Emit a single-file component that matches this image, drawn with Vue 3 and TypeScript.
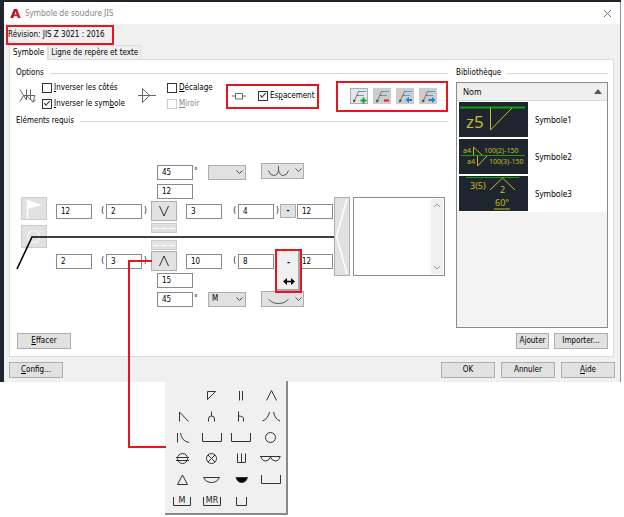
<script setup lang="ts">
import { ref } from 'vue'

const flipSides = ref(false)
const flipSymbol = ref(true)
const stagger = ref(false)
const spacing = ref(true)
const note = ref('')

interface Side {
  size: string
  depth: string
  length: string
  count: string
  pitch: string
  root: string
  angle: string
  method: string
}

const upper = ref<Side>({ size: '12', depth: '2', length: '3', count: '4', pitch: '12', root: '12', angle: '45', method: '' })
const lower = ref<Side>({ size: '2', depth: '3', length: '10', count: '8', pitch: '12', root: '15', angle: '45', method: 'M' })

const leaderTools = [
  { name: 'Ajouter une ligne de repère', kind: 'add' },
  { name: 'Supprimer une ligne de repère', kind: 'remove' },
  { name: 'Repère précédent', kind: 'prev' },
  { name: 'Repère suivant', kind: 'next' },
]

interface Glyph {
  name: string
  d: string
  fill?: boolean
  text?: string
}

/* Each glyph is drawn in a 30 x 21 cell. */
const glyphs: Glyph[] = [
  { name: 'Aucun', d: '' },
  { name: 'Angle', d: 'M11.5 6.5H19.5L11.5 14.5Z' },
  { name: 'Bords droits', d: 'M13.5 6V15.5M16.5 6V15.5' },
  { name: 'V', d: 'M10.5 15.5L15.5 5.5L20.5 15.5' },
  { name: 'Demi-V', d: 'M13.5 15.5V6L22.5 15.5' },
  { name: 'U', d: 'M15.5 5.5V10M12.5 15.5V13Q12.5 10 15.5 10Q18.5 10 18.5 13V15.5' },
  { name: 'J', d: 'M12.5 5.5V15.5M12.5 10Q17.5 10 17.5 13V15.5' },
  { name: 'V évasé', d: 'M6.5 15Q12 13 13.5 6M17.5 6Q19 13 24 15' },
  { name: 'Demi-V évasé', d: 'M11.5 6V15.5M14.5 6Q15.5 14 23 15.5' },
  { name: 'Bouchon', d: 'M6.5 6V14.5H25.5V6' },
  { name: 'Rainure', d: 'M5.5 6V14.5H24.5V6' },
  { name: 'Point', d: 'M9.5 10.5A5 5 0 1 0 19.5 10.5A5 5 0 1 0 9.5 10.5' },
  { name: 'Molette', d: 'M11.5 10.5A5 5 0 1 0 21.5 10.5A5 5 0 1 0 11.5 10.5M10 9.5H23M10 12.5H23' },
  { name: 'Goujon', d: 'M10.5 10.5A5 5 0 1 0 20.5 10.5A5 5 0 1 0 10.5 10.5M12 7L19 14M19 7L12 14' },
  { name: 'Bord', d: 'M11.5 5.5V14.5H19.5V5.5M15.5 5.5V14.5' },
  { name: 'Rechargement', d: 'M4 8.5H24.5M5 8.5Q6 13 9.5 13Q13 13 14.5 9Q16 13 19.5 13Q23 13 24 8.5' },
  { name: 'Triangle', d: 'M11.5 15.5L16.5 6L21.5 15.5Z' },
  { name: 'Envers', d: 'M7.5 8.5H23.5Q21 13.5 15.5 13.5Q10 13.5 7.5 8.5Z' },
  { name: 'Pénétration', d: 'M10 8.5H21.5Q20 13.5 15.7 13.5Q11.5 13.5 10 8.5Z', fill: true },
  { name: 'Support', d: 'M5.5 6V14.5H24.5V6' },
  { name: 'Support M', d: 'M7.5 7V15.5H24.5V7', text: 'M' },
  { name: 'Support MR', d: 'M7.5 7V15.5H24.5V7', text: 'MR' },
  { name: 'Support carré', d: 'M10.5 7V15.5H20.5V7' },
]
</script>

<template>
  <div class="screen">
    <div class="frame">
      <section class="dialog" role="dialog" aria-labelledby="dlg-title">
        <header class="titlebar">
          <svg class="logo" width="11" height="11" viewBox="0 0 11 11" aria-hidden="true">
            <path d="M0.3 10L4 1H7L10.7 10H7.8L7.2 8.2H3.8L3.2 10Z" fill="#c8202c" />
            <path d="M4.5 6.4L5.5 3.4L6.5 6.4Z" fill="#fff" />
            <path d="M4 1H7L7.6 2.5H5.6L3 10H0.3Z" fill="#8e1520" opacity=".55" />
          </svg>
          <h1 id="dlg-title">Symbole de soudure JIS</h1>
          <button class="close" type="button" aria-label="Fermer">
            <svg width="9" height="9" viewBox="0 0 9 9"><path d="M1 1L8 8M8 1L1 8" stroke="#777" fill="none" /></svg>
          </button>
        </header>

        <div class="revision"><span>Révision: JIS Z 3021 : 2016</span></div>

        <nav class="tabs" role="tablist">
          <button type="button" role="tab" aria-selected="true" class="tab active">Symbole</button>
          <button type="button" role="tab" aria-selected="false" class="tab">Ligne de repère et texte</button>
        </nav>

        <div class="panel">
          <div class="left">
            <h2 class="legend">Options</h2>
            <div class="options">
              <svg class="opt-icon" width="18" height="18" viewBox="0 0 18 18" aria-hidden="true">
                <path d="M1 2.5L4.5 8.5L1 14.5M4.5 8.5H16M7.5 2.5V13L4.5 8.5M11.5 2.5V13L7.5 8.5M16 8.5L14 15M11.5 12L13.8 15.2L16.5 13" stroke="#666" fill="none" />
              </svg>
              <div class="checks first">
                <label><input v-model="flipSides" type="checkbox" /><span><u>I</u>nverser les côtés</span></label>
                <label><input v-model="flipSymbol" type="checkbox" /><span><u>I</u>nverser le sym<u>b</u>ole</span></label>
              </div>
              <svg class="opt-icon" width="18" height="18" viewBox="0 0 18 18" aria-hidden="true">
                <path d="M0 8.5H18M4.5 1.5V15.5L11.5 8.5L4.5 1.5" stroke="#666" fill="none" />
              </svg>
              <div class="checks second">
                <label><input v-model="stagger" type="checkbox" /><span><u>D</u>écalage</span></label>
                <label class="off"><input type="checkbox" disabled /><span><u>M</u>iroir</span></label>
              </div>
              <div class="marked spacing">
                <svg width="14" height="8" viewBox="0 0 14 8" aria-hidden="true">
                  <path d="M0 4H3M11 4H14M3.5 1.5H10.5V7H3.5Z" stroke="#666" fill="none" />
                </svg>
                <label><input v-model="spacing" type="checkbox" /><span>Es<u>p</u>acement</span></label>
              </div>
              <div class="marked tools">
                <button v-for="t in leaderTools" :key="t.kind" type="button" class="btn tool" :class="t.kind" :aria-label="t.name">
                  <svg width="17" height="15" viewBox="0 0 17 15">
                    <path d="M3 12.5L7.5 2.5H9M6 6.5H8" stroke="#777" fill="none" />
                    <path d="M2 13.5L2.6 10.5L5 11.8Z" fill="#333" />
                    <path d="M9 2.5H15M8 6.5H13" stroke="#5c9cc9" fill="none" />
                    <path v-if="t.kind === 'add'" d="M9.5 11.5H15.5M12.5 8.5V14.5" stroke="#12a33c" stroke-width="2" />
                    <path v-else-if="t.kind === 'remove'" d="M10 11.5H15" stroke="#ea1c24" stroke-width="2" />
                    <path v-else-if="t.kind === 'prev'" d="M8.5 11L12 8V10H15V12H12V14Z" fill="#1686e0" />
                    <path v-else d="M15.5 11L12 8V10H8.5V12H12V14Z" fill="#1686e0" />
                  </svg>
                </button>
              </div>
            </div>

            <h2 class="legend second-legend">Eléments requis</h2>

            <div class="canvas">
              <div class="flags">
                <button type="button" class="btn" aria-label="Soudure sur chantier">
                  <svg width="24" height="21" viewBox="0 0 24 21"><path d="M5.5 2V20" stroke="#fff" stroke-width="1.5" /><path d="M6 2L20 7L6 11Z" fill="#fff" /></svg>
                </button>
                <button type="button" class="btn" aria-label="Soudure périphérique">
                  <svg width="24" height="21" viewBox="0 0 24 21"><circle cx="11.5" cy="10.5" r="6" stroke="#f4f4f4" stroke-width="1.5" fill="none" /></svg>
                </button>
              </div>

              <div class="fields">
                <div class="row angle top">
                  <input v-model="upper.angle" aria-label="Angle supérieur" /><span class="deg">°</span>
                  <span class="select">
                    <select v-model="upper.method" aria-label="Méthode supérieure"><option></option><option>M</option></select>
                    <svg width="7" height="5" viewBox="0 0 7 5"><path d="M.5 .5L3.5 3.5L6.5 .5" stroke="#444" fill="none" /></svg>
                  </span>
                  <button type="button" class="btn contour" aria-label="Contour supérieur">
                    <svg width="42" height="15" viewBox="0 0 42 15"><path d="M6.5 7.5Q8 12.5 11.5 12.5Q16 12.5 16.5 7V3M16.5 7Q17.5 12.5 21.5 12.5Q25 12.5 26.5 7.5M33.5 5.5L36.5 8.5L39.5 5.5" stroke="#555" fill="none" /></svg>
                  </button>
                </div>
                <div class="row root"><input v-model="upper.root" aria-label="Jeu supérieur" /></div>
                <div class="row main">
                  <input v-model="upper.size" aria-label="Cote supérieure" />
                  <span class="open">(</span><input v-model="upper.depth" aria-label="Profondeur supérieure" /><span class="end">)</span>
                  <button type="button" class="btn symbol" aria-label="Symbole supérieur"><svg width="12" height="12" viewBox="0 0 12 12"><path d="M1.5 1L6 11L10.5 1" stroke="#333" fill="none" /></svg></button>
                  <input v-model="upper.length" class="len" aria-label="Longueur supérieure" />
                  <span class="open">(</span><input v-model="upper.count" aria-label="Nombre supérieur" /><span class="shut">)</span>
                  <button type="button" class="btn dash">-</button>
                  <input v-model="upper.pitch" class="pitch" aria-label="Pas supérieur" />
                </div>
                <button type="button" class="btn ident up" aria-label="Ligne d'identification supérieure"><i></i><i></i><i></i></button>
                <button type="button" class="btn ident down" aria-label="Ligne d'identification inférieure"><i></i><i></i><i></i></button>
                <div class="row main lowmain">
                  <input v-model="lower.size" aria-label="Cote inférieure" />
                  <span class="open">(</span><input v-model="lower.depth" aria-label="Profondeur inférieure" /><span class="end">)</span>
                  <button type="button" class="btn symbol" aria-label="Symbole inférieur"><svg width="12" height="12" viewBox="0 0 12 12"><path d="M1.5 11L6 1L10.5 11" stroke="#333" fill="none" /></svg></button>
                  <input v-model="lower.length" class="len" aria-label="Longueur inférieure" />
                  <span class="open">(</span><input v-model="lower.count" aria-label="Nombre inférieur" /><span class="shut"></span>
                  <span class="dash-slot">
                    <span class="sep-menu" role="menu">
                      <button type="button" role="menuitem">-</button>
                      <button type="button" role="menuitem" aria-label="Double flèche"><svg width="12" height="7" viewBox="0 0 12 7"><path d="M0 3.5L4 0V2.8H8V0L12 3.5L8 7V4.2H4V7Z" fill="#000" /></svg></button>
                    </span>
                  </span>
                  <input v-model="lower.pitch" class="pitch" aria-label="Pas inférieur" />
                </div>
                <div class="row root low"><input v-model="lower.root" aria-label="Jeu inférieur" /></div>
                <div class="row angle">
                  <input v-model="lower.angle" aria-label="Angle inférieur" /><span class="deg">°</span>
                  <span class="select">
                    <select v-model="lower.method" aria-label="Méthode inférieure"><option></option><option>M</option></select>
                    <svg width="7" height="5" viewBox="0 0 7 5"><path d="M.5 .5L3.5 3.5L6.5 .5" stroke="#444" fill="none" /></svg>
                  </span>
                  <button type="button" class="btn contour" aria-label="Contour inférieur">
                    <svg width="42" height="15" viewBox="0 0 42 15"><path d="M6.5 7Q10 11.5 16.5 11.5Q23 11.5 26.5 7M33.5 5.5L36.5 8.5L39.5 5.5" stroke="#555" fill="none" /></svg>
                  </button>
                </div>
              </div>

              <button type="button" class="btn tail" aria-label="Queue">
                <svg width="14" height="77" viewBox="0 0 14 77"><path d="M12 1L1.5 38.5L12 76" stroke="#fff" stroke-width="1.5" fill="none" /></svg>
              </button>
              <div class="note">
                <textarea v-model="note" aria-label="Note"></textarea>
                <div class="scroll" aria-hidden="true">
                  <svg width="8" height="5" viewBox="0 0 8 5"><path d="M1 4L4 1L7 4" stroke="#999" fill="none" /></svg>
                  <svg width="8" height="5" viewBox="0 0 8 5"><path d="M1 1L4 4L7 1" stroke="#999" fill="none" /></svg>
                </div>
              </div>

              <svg class="leader" width="320" height="40" viewBox="0 0 320 40" aria-hidden="true">
                <path d="M1 34L16 2H318" stroke="#000" stroke-width="1.6" fill="none" />
              </svg>
            </div>

            <div class="left-foot"><button type="button" class="btn wide"><span><u>E</u>ffacer</span></button></div>
          </div>

          <aside class="library">
            <h2 class="legend">Bibliothèque</h2>
            <div class="list">
              <div class="list-head"><span>Nom</span><svg width="8" height="5" viewBox="0 0 8 5" aria-hidden="true"><path d="M0 5L4 0L8 5Z" fill="#555" /></svg></div>
              <ul>
                <li>
                  <svg width="69" height="35" viewBox="0 0 69 35" aria-hidden="true">
                    <rect width="69" height="35" fill="#1f252e" /><path d="M1 5.5H66" stroke="#10a010" stroke-width="2" />
                    <path d="M31.5 6V28L53 6" stroke="#c5bd28" fill="none" />
                    <text x="7" y="26" font-size="17">z5</text>
                  </svg>
                  <span>Symbole1</span>
                </li>
                <li>
                  <svg width="69" height="35" viewBox="0 0 69 35" aria-hidden="true">
                    <rect width="69" height="35" fill="#1f252e" /><path d="M2 16.5H66" stroke="#10a010" />
                    <path d="M14.5 16V8L23 16M18.5 17V27L28 17" stroke="#c5bd28" fill="none" />
                    <text x="4" y="14" font-size="7">a4</text><text x="25" y="14" font-size="7">100(2)-150</text>
                    <text x="8" y="25" font-size="7">a4</text><text x="30" y="25" font-size="7">100(3)-150</text>
                  </svg>
                  <span>Symbole2</span>
                </li>
                <li>
                  <svg width="69" height="35" viewBox="0 0 69 35" aria-hidden="true">
                    <rect width="69" height="35" fill="#1f252e" /><path d="M7 1.5H60" stroke="#10a010" />
                    <path d="M31 14L43.5 2L56 14" stroke="#c5bd28" fill="none" /><path d="M35 33H51" stroke="#c5bd28" />
                    <text x="11" y="13" font-size="9">3(5)</text><text x="41" y="17" font-size="9">2</text><text x="36" y="30" font-size="9">60°</text>
                  </svg>
                  <span>Symbole3</span>
                </li>
              </ul>
            </div>
            <div class="lib-foot">
              <button type="button" class="btn narrow">Ajouter</button>
              <button type="button" class="btn wide">Importer...</button>
            </div>
          </aside>
        </div>

        <footer class="actions">
          <button type="button" class="btn wide config"><span><u>C</u>onfig...</span></button>
          <button type="button" class="btn wide">OK</button>
          <button type="button" class="btn wide">Annuler</button>
          <button type="button" class="btn wide"><span><u>A</u>ide</span></button>
        </footer>
      </section>
    </div>

    <div class="palette" role="menu">
      <button v-for="g in glyphs" :key="g.name" type="button" role="menuitem" :aria-label="g.name">
        <svg width="30" height="21" viewBox="0 0 30 21">
          <path :d="g.d" stroke="#333" :fill="g.fill ? '#000' : 'none'" />
          <text v-if="g.text" x="16" y="13" text-anchor="middle">{{ g.text }}</text>
        </svg>
      </button>
    </div>

    <svg class="callout" width="40" height="190" viewBox="0 0 40 190" aria-hidden="true">
      <path d="M25 2H2V188H39" stroke="#ea1420" stroke-width="2" fill="none" />
    </svg>
  </div>
</template>

<style>
body {
  margin: 0;
  background: #fff;
}
</style>

<style scoped>
.screen {
  position: relative;
  font-family: "DejaVu Sans Condensed", "DejaVu Sans", sans-serif;
  font-size: 8px;
  line-height: 10px;
  color: #000;
}
.screen *,
.screen *::before {
  box-sizing: border-box;
}
svg {
  display: block;
  flex: none;
}
button,
input,
select,
textarea {
  font: inherit;
  color: inherit;
  margin: 0;
  padding: 0;
  border: 0;
  background: none;
}
.frame {
  margin-right: 3px;
  padding: 2px 0 0 4px;
  background: #20262f;
}
.dialog {
  background: #f0f0f0;
  border-right: 1px solid #8b8f9a;
}
.titlebar {
  display: flex;
  align-items: center;
  gap: 4px;
  height: 22px;
  padding: 0 8px 0 6px;
  background: #fff;
}
h1 {
  flex: 1;
  margin: 0;
  font: 400 8px/12px "Noto Sans", sans-serif;
  color: #888;
}
.revision {
  display: flex;
  padding: 1px 0 0 2px;
}
.revision span {
  width: 108px;
  padding: 3px 0;
  border: 2px solid #ea1420;
  white-space: nowrap;
}
.tabs {
  display: flex;
  align-items: flex-end;
  padding-left: 5px;
}
.tab {
  height: 14px;
  padding: 0 2px;
  border: 1px solid #dcdcdc;
  border-bottom: 0;
  white-space: nowrap;
}
.tab.active {
  position: relative;
  height: 15px;
  margin-bottom: -1px;
  padding: 0 3px;
  background: #fff;
}
.panel {
  display: flex;
  gap: 8px;
  margin: 0 6px 0 5px;
  padding: 8px 5px 7px 6px;
  background: #fff;
  border: 1px solid #dcdcdc;
}
.left {
  flex: 1;
  min-width: 0;
  display: flex;
  flex-direction: column;
}
.legend {
  display: flex;
  align-items: center;
  gap: 6px;
  margin: 0;
  font-size: 8px;
  font-weight: 400;
}
.legend::after {
  content: "";
  flex: 1;
  height: 1px;
  background: #dcdcc8;
}
.options {
  display: flex;
  align-items: center;
  height: 32px;
  margin-top: 2px;
  padding-left: 3px;
}
.checks {
  display: flex;
  flex-direction: column;
  gap: 6px;
}
.first {
  width: 96px;
  margin-left: 5px;
}
.second {
  width: 59px;
  margin-left: 11px;
}
label {
  display: flex;
  align-items: center;
  gap: 2px;
  white-space: nowrap;
}
.off {
  color: #888;
}
input[type="checkbox"] {
  appearance: none;
  flex: none;
  width: 10px;
  height: 10px;
  border: 1px solid #333;
  background: #fff;
}
input[type="checkbox"]:checked::before {
  content: "";
  display: block;
  width: 6px;
  height: 3px;
  margin: 1px;
  border: solid #333;
  border-width: 0 0 1px 1px;
  transform: rotate(-45deg);
}
input[type="checkbox"]:disabled {
  border-color: #ccc;
}
.marked {
  display: flex;
  align-items: center;
  border: 2px solid #ea1420;
}
.spacing {
  gap: 12px;
  width: 93px;
  height: 25px;
  padding-left: 4px;
}
.tools {
  gap: 5px;
  height: 31px;
  margin-left: auto;
  padding: 0 9px 0 12px;
}
.btn {
  display: flex;
  align-items: center;
  justify-content: center;
  flex: none;
  border: 1px solid #adadad;
  background: #e1e1e1;
}
.tool {
  width: 18px;
  height: 16px;
  background: #ccc;
  border-color: #ccc;
}
.tool.add {
  background: #e6e6e6;
  border-color: #adadad;
}
.second-legend {
  margin-top: 4px;
}
.canvas {
  position: relative;
  display: flex;
  align-items: flex-start;
  margin-top: 37px;
  padding: 0 3px 0 5px;
}
.flags {
  display: flex;
  flex-direction: column;
  gap: 5px;
  margin-top: 34px;
}
.flags .btn {
  width: 26px;
  height: 23px;
  border-color: #ccc;
}
.fields {
  width: 277px;
  margin-left: 9px;
}
.row {
  display: flex;
  align-items: center;
}
.row input {
  flex: none;
  width: 36px;
  height: 15px;
  padding-left: 4px;
  border: 1px solid #8a8a8a;
  background: #fff;
}
.angle {
  height: 18px;
  padding-left: 101px;
}
.angle.top .contour {
  margin-bottom: 3px;
}
.deg {
  width: 15px;
  padding-left: 1px;
}
.select {
  position: relative;
  width: 38px;
}
.select select {
  appearance: none;
  display: block;
  width: 100%;
  height: 15px;
  padding-left: 3px;
  border: 1px solid #adadad;
  border-radius: 0;
  background: #e1e1e1;
}
.select svg {
  position: absolute;
  right: 3px;
  top: 5px;
  pointer-events: none;
}
.contour {
  width: 43px;
  height: 16px;
  margin-left: 15px;
}
.root {
  padding: 3px 0 2px 101px;
}
.main {
  height: 20px;
}
.open {
  width: 14px;
  padding-right: 2px;
  text-align: right;
}
.len + .open {
  width: 16px;
}
.end {
  width: 9px;
  padding-left: 2px;
}
.shut {
  width: 6px;
  padding-left: 2px;
}
.symbol {
  width: 26px;
  height: 20px;
}
.row .len {
  margin-left: 9px;
}
.dash {
  width: 16px;
  height: 14px;
  font-weight: 700;
}
.row .pitch {
  margin-left: 1px;
}
.dash-slot {
  position: relative;
  width: 16px;
  height: 14px;
}
.sep-menu {
  position: absolute;
  left: -5px;
  top: -5px;
  z-index: 2;
  display: grid;
  grid-template-rows: 20px 16px;
  width: 27px;
  padding: 2px 1px;
  border: 2px solid #ea1420;
  background: #f0f0f0;
  box-shadow: inset -2px -2px 0 #a6a6a6;
  font-weight: 700;
}
.sep-menu button {
  display: flex;
  align-items: center;
  justify-content: center;
}
.ident {
  gap: 2px;
  width: 26px;
  height: 10px;
  margin-left: 95px;
  border-color: #ccc;
}
.ident i {
  width: 6px;
  height: 1px;
  background: #fff;
}
.ident.up {
  margin-top: 2px;
}
.ident.down {
  margin-top: 7px;
}
.lowmain {
  margin-top: 1px;
}
.root.low {
  padding-top: 2px;
}
.tail {
  width: 16px;
  height: 79px;
  margin: 34px 3px 0 1px;
}
.note {
  flex: 1;
  display: flex;
  min-width: 0;
  height: 79px;
  margin-top: 34px;
  border: 1px solid #8a8a8a;
  background: #fff;
}
textarea {
  flex: 1;
  min-width: 0;
  resize: none;
  overflow: hidden;
}
.scroll {
  display: flex;
  flex-direction: column;
  align-items: center;
  justify-content: space-between;
  width: 12px;
  margin: 1px;
  padding: 4px 0;
  background: #f0f0f0;
}
.leader {
  position: absolute;
  left: 0;
  top: 72px;
  pointer-events: none;
}
.left-foot {
  margin-top: auto;
  padding-left: 1px;
}
.wide {
  width: 54px;
  height: 16px;
}
.narrow {
  width: 33px;
  height: 16px;
}
.library {
  display: flex;
  flex-direction: column;
  width: 152px;
}
.list {
  height: 246px;
  margin-top: 4px;
  border: 1px solid #8a8a8a;
  background: #f3f3f3;
  font-family: "Noto Sans", sans-serif;
}
.list-head {
  display: flex;
  align-items: center;
  justify-content: space-between;
  height: 18px;
  padding: 0 5px 0 6px;
  background: #efefef;
  border-bottom: 1px solid #dcdcdc;
}
ul {
  margin: 0;
  padding: 0;
  list-style: none;
}
li {
  display: flex;
  align-items: center;
  gap: 7px;
  padding: 1px 2px;
  background: #fff;
}
li text {
  font-family: "Noto Sans", sans-serif;
  fill: #c5bd28;
}
.lib-foot {
  display: flex;
  justify-content: flex-end;
  gap: 5px;
  margin-top: 5px;
}
.actions {
  display: flex;
  gap: 6px;
  padding: 5px 5px 4px;
}
.config {
  margin-right: auto;
}
.palette {
  position: relative;
  display: grid;
  grid-template-columns: repeat(4, 30px);
  grid-auto-rows: 21px;
  width: 123px;
  margin: -1px 0 0 165px;
  padding: 4px 0 2px 1px;
  border: solid #8a8a8a;
  border-width: 0 2px 2px 0;
  background: #f0f0f0;
}
.palette button {
  display: block;
}
.palette text {
  font: 8px "DejaVu Sans", sans-serif;
  fill: #222;
}
.callout {
  position: absolute;
  left: 127px;
  top: 259px;
  pointer-events: none;
}
</style>
